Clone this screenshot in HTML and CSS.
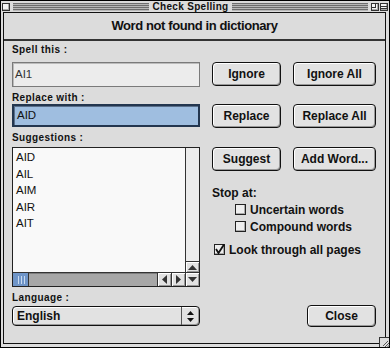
FILE: index.html
```html
<html>
<head>
<title>Check Spelling</title>
<meta name="viewport" content="width=device-width, initial-scale=1">
<link rel="stylesheet" href="styles.css">
</head>
<body>
<div class="window">
  <div class="titlebar">
    <span class="tbox"></span>
    <div class="stripes"><i></i><i></i><i></i><i></i></div>
    <span class="title">Check Spelling</span>
    <div class="stripes"><i></i><i></i><i></i><i></i></div>
    <span class="tbox zoom"><span></span></span>
    <span class="tbox shade"><span></span></span>
  </div>
  <div class="frame">
    <div class="header">Word not found in dictionary</div>
    <div class="grid">
      <div class="label top">Spell this :</div>
      <div class="field">AI1</div>
      <div class="btns"><div class="btn">Ignore</div><div class="btn">Ignore All</div></div>

      <div class="label">Replace with :</div>
      <div class="field active">AID</div>
      <div class="btns"><div class="btn">Replace</div><div class="btn">Replace All</div></div>

      <div class="label">Suggestions :</div>
      <div class="list">
        <ul class="items">
          <li>AID</li>
          <li>AIL</li>
          <li>AIM</li>
          <li>AIR</li>
          <li>AIT</li>
        </ul>
        <div class="vbar">
          <div class="arrow"><svg width="9" height="5" viewBox="0 0 9 5"><polygon points="4.5,0 9,5 0,5" fill="#333"/></svg></div>
        </div>
        <div class="hbar">
          <div class="thumb"></div>
          <div class="track"></div>
          <div class="arrow side"><svg width="5" height="9" viewBox="0 0 5 9"><polygon points="0,4.5 5,0 5,9" fill="#333"/></svg></div>
          <div class="arrow side"><svg width="5" height="9" viewBox="0 0 5 9"><polygon points="5,4.5 0,0 0,9" fill="#333"/></svg></div>
        </div>
        <div class="corner arrow"><svg width="9" height="5" viewBox="0 0 9 5"><polygon points="4.5,5 9,0 0,0" fill="#333"/></svg></div>
      </div>
      <div class="options">
        <div class="btns"><div class="btn">Suggest</div><div class="btn">Add Word...</div></div>
        <div class="stop">Stop at:</div>
        <div class="check indent"><span class="cb"></span>Uncertain words</div>
        <div class="check indent"><span class="cb"></span>Compound words</div>
        <div class="check all"><span class="cb"><svg width="11" height="11" viewBox="0 0 11 11"><polyline points="2,5 4.5,9 10,0.5" fill="none" stroke="#111" stroke-width="1.8"/></svg></span>Look through all pages</div>
      </div>

      <div class="label">Language :</div>
      <div class="popup">
        <span class="value">English</span>
        <span class="updown"><svg width="7" height="11" viewBox="0 0 7 11"><polygon points="3.5,0 7,4 0,4" fill="#111"/><polygon points="3.5,11 7,7 0,7" fill="#111"/></svg></span>
      </div>
      <div class="btns close-row"><div class="btn close">Close</div></div>
    </div>
  </div>
  <div class="grow"><svg width="10" height="10" viewBox="0 0 10 10"><path d="M3 8 L8 3 M5 9 L9 5 M7 9.5 L9.5 7" stroke="#555" stroke-width="1"/></svg></div>
</div>
</body>
</html>
```

FILE: styles.css
```css
body {
  margin: 0;
  background: #fff;
  font-family: "Liberation Sans", Arial, sans-serif;
  color: #111;
}
.window {
  position: relative;
  width: 390px;
  height: 348px;
  box-sizing: border-box;
  border: 1px solid #000;
  background: #dcdcdc;
  display: flex;
  flex-direction: column;
}
.titlebar {
  flex: none;
  height: 11px;
  display: flex;
  align-items: center;
  padding: 0 1px;
  background: #dcdcdc;
}
.stripes {
  flex: 1;
  min-width: 0;
  height: 8px;
  margin: 0 3px;
  background: #b8b8b8;
  display: flex;
  flex-direction: column;
}
.stripes i {
  display: block;
  height: 1px;
  margin-bottom: 1px;
  background: #6e6e6e;
}
.title {
  font-size: 10px;
  font-weight: bold;
  letter-spacing: 0.3px;
  line-height: 10px;
  padding: 0 1px;
}
.tbox {
  position: relative;
  flex: none;
  width: 6px;
  height: 6px;
  border: 1px solid #333;
  background: #f4f4f4;
  box-shadow: inset -1px -1px #aaa;
}
.tbox.zoom { margin-right: 1px; }
.tbox.zoom span {
  position: absolute;
  left: 0;
  top: 0;
  width: 3px;
  height: 3px;
  border-right: 1px solid #333;
  border-bottom: 1px solid #333;
}
.tbox.shade span {
  position: absolute;
  left: 0;
  right: 0;
  top: 2px;
  height: 1px;
  border-top: 1px solid #333;
  border-bottom: 1px solid #333;
}
.frame {
  flex: none;
  height: 332px;
  box-sizing: border-box;
  margin: 0 3px 0 2px;
  border: 1px solid #111;
  background: #dcdcdc;
}
.header {
  height: 26px;
  line-height: 26px;
  text-align: center;
  font-size: 13px;
  font-weight: bold;
  letter-spacing: -0.4px;
  border-bottom: 2px solid #333;
}
.grid {
  display: grid;
  grid-template-columns: 188px 164px;
  grid-template-rows: 21px 25px 17px 23px 20px 140px 18px 22px;
  column-gap: 12px;
  padding-left: 8px;
}
.label {
  grid-column: 1;
  font-size: 10px;
  font-weight: bold;
  letter-spacing: 0.4px;
  line-height: 13px;
  padding-top: 4px;
}
.label.top { padding-top: 2px; }
.field {
  grid-column: 1;
  box-sizing: border-box;
  border: 1px solid #7a7a7a;
  background: #ececec;
  box-shadow: inset 1px 1px #bbb;
  font-size: 11.5px;
  line-height: 23px;
  padding-left: 2px;
  color: #333;
}
.field.active {
  border: 2px solid #23364f;
  background: #9fbee0;
  box-shadow: inset 1px 1px #5a6f8a;
  line-height: 19px;
  padding-left: 3px;
  color: #111;
}
.btns {
  grid-column: 2;
  display: flex;
  justify-content: space-between;
  height: 24px;
}
.btn {
  box-sizing: border-box;
  width: 69px;
  height: 24px;
  border: 1px solid #111;
  border-radius: 4px;
  background: #e2e2e2;
  box-shadow: inset 1px 1px #fff, inset -1px -1px #999;
  text-align: center;
  font-size: 12px;
  font-weight: bold;
  line-height: 22px;
}
.btn + .btn { width: 83px; }
.btns.close-row { height: 22px; justify-content: flex-end; }
.btn.close { height: 22px; line-height: 20px; }
.list {
  grid-column: 1;
  box-sizing: border-box;
  border: 1px solid #222;
  background: #f9f9f9;
  display: grid;
  grid-template-columns: 1fr 14px;
  grid-template-rows: 1fr 14px;
}
.items {
  margin: 0;
  padding: 1px 0 0 3px;
  list-style: none;
  font-size: 11.5px;
  line-height: 16.5px;
}
.vbar {
  border-left: 1px solid #333;
  background: #ececec;
  display: flex;
  flex-direction: column;
  justify-content: flex-end;
}
.arrow {
  display: flex;
  align-items: center;
  justify-content: center;
  background: #e2e2e2;
  box-shadow: inset 1px 1px #fff, inset -1px -1px #999;
}
.vbar .arrow {
  height: 10px;
  border-top: 1px solid #333;
}
.hbar {
  border-top: 1px solid #333;
  display: flex;
}
.thumb {
  width: 15px;
  background: repeating-linear-gradient(to right, #6f95c8 0 2px, #c8daf0 2px 3px);
  background-size: 9px 8px;
  background-position: 3px 3px;
  background-repeat: no-repeat;
  background-color: #6f95c8;
  border-right: 1px solid #333;
}
.track {
  flex: 1;
  background: #a7a7a7;
  box-shadow: inset 0 1px #7d7d7d;
}
.arrow.side {
  width: 13px;
  border-left: 1px solid #333;
}
.corner {
  border-top: 1px solid #333;
  border-left: 1px solid #333;
}
.options {
  grid-column: 2;
  font-size: 12px;
  font-weight: bold;
}
.stop {
  margin-top: 14px;
  line-height: 16px;
}
.check {
  display: flex;
  align-items: center;
  height: 17px;
}
.check.indent { padding-left: 23px; }
.check.all {
  padding-left: 2px;
  margin-top: 6px;
}
.cb {
  box-sizing: border-box;
  width: 11px;
  height: 11px;
  border: 1px solid #222;
  background: #eee;
  box-shadow: inset -1px -1px #aaa;
  margin-right: 4px;
  display: flex;
}
.cb svg { margin: -1px; }
.popup {
  grid-column: 1;
  align-self: center;
  box-sizing: border-box;
  height: 20px;
  border: 1px solid #111;
  border-radius: 4px;
  background: #e2e2e2;
  box-shadow: inset 1px 1px #fff, inset -1px -1px #999;
  display: flex;
}
.value {
  flex: 1;
  font-size: 12px;
  font-weight: bold;
  line-height: 18px;
  padding-left: 4px;
}
.updown {
  width: 17px;
  border-left: 1px solid #555;
  display: flex;
  align-items: center;
  justify-content: center;
}
.grow {
  position: absolute;
  right: 0;
  bottom: 0;
  width: 10px;
  height: 10px;
  box-sizing: border-box;
  border-left: 1px solid #333;
  border-top: 1px solid #333;
  background: #dcdcdc;
}
.grow svg { display: block; }
```
